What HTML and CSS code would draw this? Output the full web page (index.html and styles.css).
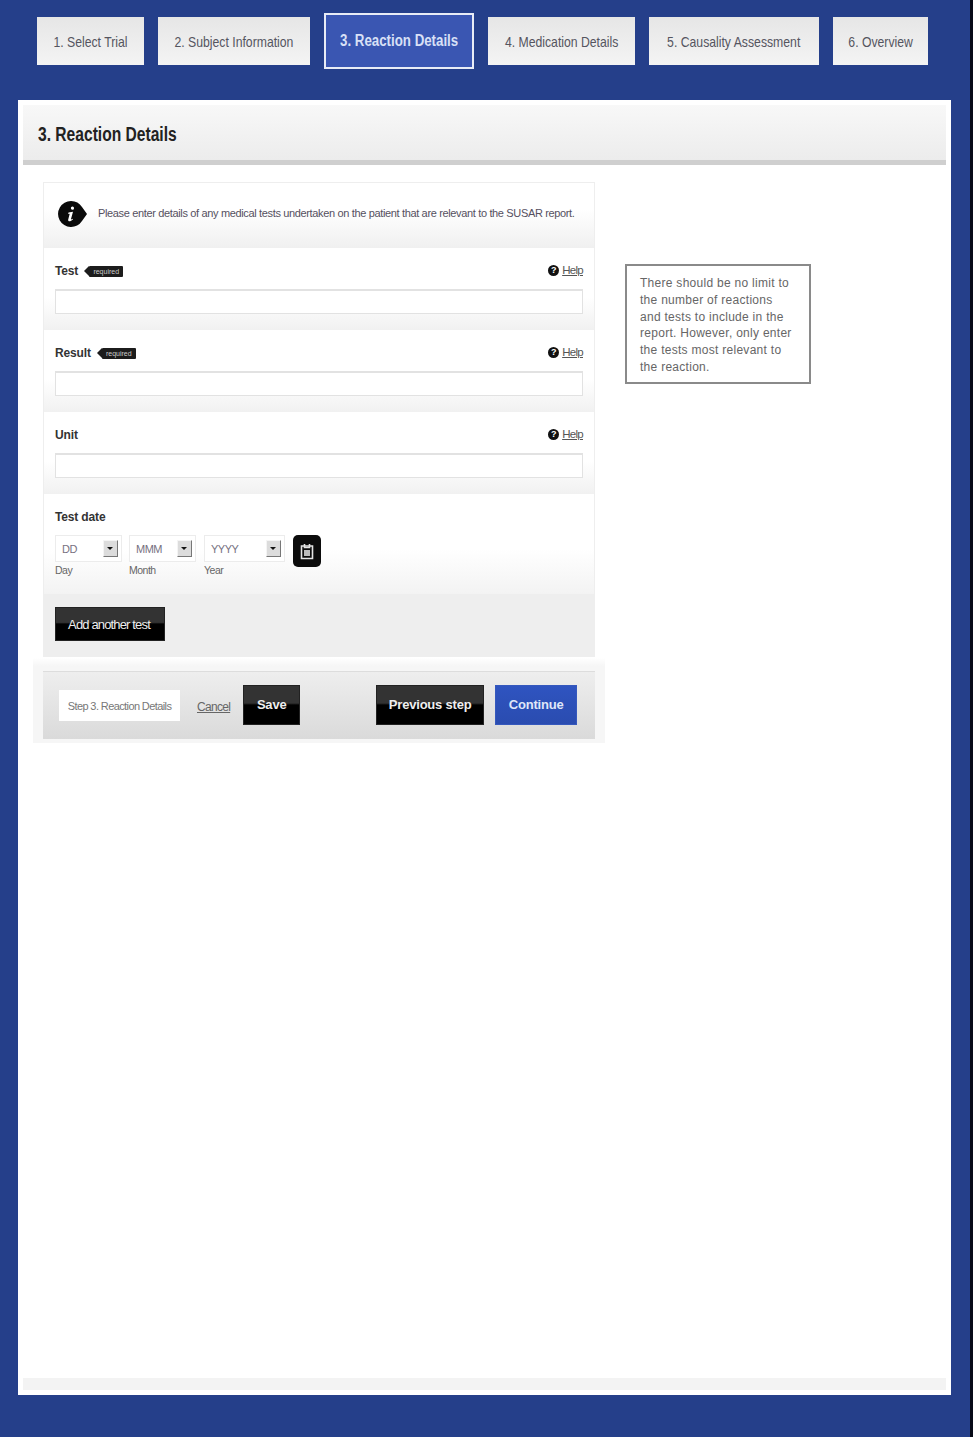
FILE: index.html
```html
<!DOCTYPE html>
<html lang="en">
<head>
    <meta charset="UTF-8">
    <meta name="viewport" content="width=device-width, initial-scale=1.0">
    <title>Reaction Details</title>
    <link rel="stylesheet" href="styles.css">
</head>
<body>
<nav class="steps">
    <a class="step"><span>1. Select Trial</span></a>
    <a class="step"><span>2. Subject Information</span></a>
    <a class="step active"><span>3. Reaction Details</span></a>
    <a class="step"><span>4. Medication Details</span></a>
    <a class="step"><span>5. Causality Assessment</span></a>
    <a class="step"><span>6. Overview</span></a>
</nav>

<main class="panel">
    <h1 class="panel-title"><span>3. Reaction Details</span></h1>
    <div class="panel-body">
        <div class="form-wrap">
            <form class="form-card">
                <div class="intro">
                    <svg class="info-icon" width="29" height="26" viewBox="0 0 29 26">
                        <path d="M13 0a13 13 0 0 1 11 6l5 7-5 7a13 13 0 1 1-11-20z" fill="#0a0a0a"/>
                        <path d="M14.5 5.500a1.600 1.600 0 1 1-.1 3.200a1.600 1.600 0 0 1 .1-3.200zM10.500 11.500l4.500-.8-2 7.300c-.1.600.3.700 1.700-.3l.3.500c-1.700 1.600-2.900 2.200-4 2-.8-.2-1-.8-.8-1.600l1.500-5.900-1.500.2z" fill="#fff"/>
                    </svg>
                    <p>Please enter details of any medical tests undertaken on the patient that are relevant to the SUSAR report.</p>
                </div>

                <div class="field">
                    <div class="field-head">
                        <label class="field-label">Test <span class="req">required</span></label>
                        <a class="help"><span class="help-dot">?</span><span class="help-link">Help</span></a>
                    </div>
                    <input type="text" class="text-input">
                </div>
                <div class="field">
                    <div class="field-head">
                        <label class="field-label">Result <span class="req">required</span></label>
                        <a class="help"><span class="help-dot">?</span><span class="help-link">Help</span></a>
                    </div>
                    <input type="text" class="text-input">
                </div>
                <div class="field">
                    <div class="field-head">
                        <label class="field-label">Unit</label>
                        <a class="help"><span class="help-dot">?</span><span class="help-link">Help</span></a>
                    </div>
                    <input type="text" class="text-input">
                </div>

                <div class="date-field">
                    <label class="field-label">Test date</label>
                    <div class="date-row">
                        <div class="date-part">
                            <div class="fake-select day"><span>DD</span><i class="arrow"></i></div>
                            <small>Day</small>
                        </div>
                        <div class="date-part">
                            <div class="fake-select month"><span>MMM</span><i class="arrow"></i></div>
                            <small>Month</small>
                        </div>
                        <div class="date-part year-part">
                            <div class="fake-select year"><span>YYYY</span><i class="arrow"></i></div>
                            <small>Year</small>
                        </div>
                        <button type="button" class="cal-btn">
                            <svg width="14" height="17" viewBox="0 0 14 17">
                                <path d="M1.500 3h11v12.500h-11z" fill="none" stroke="#e4e4e4" stroke-width="1.600"/>
                                <path d="M4.500 1v3.500h5V1" fill="none" stroke="#e4e4e4" stroke-width="1.600"/>
                                <path d="M4 7h6v6H4z" fill="#bbb"/>
                            </svg>
                        </button>
                    </div>
                </div>

                <div class="add-row">
                    <button type="button" class="btn-black add-btn">Add another test</button>
                </div>
            </form>

            <div class="actions">
                <span class="step-name">Step 3. Reaction Details</span>
                <a class="cancel">Cancel</a>
                <button type="button" class="btn-black action-btn save-btn">Save</button>
                <button type="button" class="btn-black action-btn prev-btn">Previous step</button>
                <button type="button" class="action-btn continue-btn">Continue</button>
            </div>
        </div>

        <aside class="note">There should be no limit to the number of reactions and tests to include in the report. However, only enter the tests most relevant to the reaction.</aside>
    </div>
    <div class="panel-foot"></div>
</main>
</body>
</html>
```

FILE: styles.css
```css
:root{
    --navy:#253f8a; --blue:#3a56b2; --line:#e2e2e2; --text:#3c3c44;
}
*{box-sizing:border-box;}
body{
    margin:0; height:1437px; overflow:hidden;
    background:var(--navy); color:var(--text);
    border-right:3px solid #070b18;
    font-family:"Liberation Sans", Arial, sans-serif;
    display:flex; flex-direction:column;
}
.steps{
    display:grid;
    grid-template-columns:107px 152px 150px 147px 170px 95px;
    column-gap:14px;
    height:48px; margin:17px 0 35px 37px;
}
.step{
    display:flex; align-items:center; justify-content:center;
    background:linear-gradient(#e6e6e6,#f4f4f4);
    color:#55555f; font-size:15px; white-space:nowrap;
}
/* the reference type is a narrow face, none is installed */
.step span{display:inline-block; transform:scaleX(.815);}
.step.active{
    margin:-4px 0;
    background:var(--blue); border:2px solid #e8ecf6;
    color:#d8e0f6; font-size:16px; font-weight:bold;
}
.step.active span{transform:scaleX(.83);}
.panel{
    width:933px; height:1295px; margin-left:18px;
    background:#fff; padding:5px 5px 0;
    display:flex; flex-direction:column;
}
.panel-title{
    margin:0; height:60px; padding:3px 0 0 15px;
    display:flex; align-items:center;
    background:linear-gradient(#f8f8f8,#ececec);
    border-bottom:5px solid #cfcfcf;
    color:#222; font-size:20px;
}
.panel-title span{display:inline-block; transform:scaleX(.78); transform-origin:left center; white-space:nowrap;}
.panel-body{flex:1; display:flex; align-items:flex-start; padding:17px 0 0 10px;}
.form-wrap{
    width:572px; padding:0 10px 4px;
    background:linear-gradient(#fff 476px,#f6f6f6 484px);
}
.form-card{border:1px solid #eee; border-width:1px 1px 0;}
.intro{
    height:65px; padding:0 0 4px 14px;
    display:flex; align-items:center; gap:11px;
    background:linear-gradient(#fff 40%,#f0f0f0);
}
.intro p{margin:0 0 2px; font-size:11px; letter-spacing:-.35px; color:#55505f; white-space:nowrap;}
.field{
    height:82px; padding:14px 11px 0;
    background:linear-gradient(#fff 60%,#f1f1f1);
}
.field-head{display:flex; justify-content:space-between; align-items:center; height:18px; margin-bottom:9px;}
.field-label{font-size:12px; font-weight:bold; color:#333; letter-spacing:-.15px;}
.req{
    display:inline-block; position:relative; margin-left:8px; padding:0 4px;
    background:#1c1c1c; color:#ccc; border-radius:1px;
    font-size:7px; line-height:11px; font-weight:normal; letter-spacing:0; vertical-align:1px;
}
.req::before{
    content:""; position:absolute; left:-5px; top:0;
    border:5.5px solid transparent; border-left-width:0; border-right-color:#1c1c1c;
}
.help{display:flex; align-items:center; gap:3px; margin-bottom:2px; font-size:11.5px; letter-spacing:-.7px; color:#555;}
.help-dot{
    width:11px; height:11px; border-radius:50%;
    background:#111; color:#fff; font-size:9px; font-weight:bold; line-height:11px; text-align:center; letter-spacing:0;
}
.help-link,.cancel{text-decoration:underline;}
.text-input{
    display:block; width:100%; height:25px;
    background:#fff; border:1px solid var(--line); border-top-width:2px;
}
.date-field{height:100px; padding:16px 11px 0; background:linear-gradient(#fff 55%,#f3f3f3);}
.date-field .field-label{display:block; line-height:15px;}
.date-row{display:flex; align-items:flex-start; gap:7px; margin-top:10px;}
.date-part{display:flex; flex-direction:column;}
.date-part small{margin-top:2px; font-size:10.5px; letter-spacing:-.5px; color:#666;}
.year-part{margin-left:1px;}
.fake-select{
    height:27px; padding:0 3px 0 6px;
    display:flex; align-items:center; justify-content:space-between;
    background:#fff; border:1px solid #ececec;
    font-size:11px; letter-spacing:-.5px; color:#77717f;
}
.day,.month{width:67px;}
.year{width:81px;}
.arrow{
    width:15px; height:17px; position:relative;
    background:#dcdcdc; border:1px solid; border-color:#f4f4f4 #777 #777 #f4f4f4;
}
.arrow::after{
    content:""; position:absolute; left:3px; top:6px;
    border:3.5px solid transparent; border-top-color:#111; border-bottom-width:0;
}
.cal-btn{
    width:28px; height:32px; padding:0; margin-left:1px;
    display:flex; align-items:center; justify-content:center;
    background:#0c0c0c; border:none; border-radius:5px;
}
.add-row{height:63px; padding:13px 11px 0; background:#eeeeee;}
.btn-black{
    background:linear-gradient(#333 45%,#000 50%);
    border:1px solid #222; color:#eee;
    font-family:inherit;
}
.add-btn{width:110px; height:34px; padding:0 2px 0 0; font-size:13px; letter-spacing:-.85px;}
.actions{
    height:68px; margin-top:14px; padding:13px 0 0 16px;
    display:flex; align-items:flex-start;
    background:linear-gradient(#eeeeee,#dadada);
    border-top:1px solid #ddd;
}
.step-name{
    width:121px; height:31px; margin-top:5px;
    display:flex; align-items:center; justify-content:center;
    background:#fff; color:#777;
    font-size:11px; letter-spacing:-.6px; white-space:nowrap;
}
.cancel{margin:15px 13px 0 17px; font-size:12px; letter-spacing:-.7px; color:#666;}
.action-btn{height:40px; padding:0 0 2px; font-family:inherit; font-size:13px; font-weight:bold; letter-spacing:-.2px;}
.save-btn{width:57px; margin-right:76px;}
.prev-btn{width:108px; margin-right:11px;}
.continue-btn{width:82px; background:linear-gradient(#2f54c0,#2a4cb0); border:1px solid #3558bd; color:#dfe6f8;}
.note{
    width:186px; height:120px; margin:82px 0 0 20px; padding:9px 14px 0 13px;
    background:#fff; border:2px solid #8a8a8a;
    color:#666; font-size:12px; line-height:16.8px; letter-spacing:.28px;
}
.panel-foot{height:12px; margin-bottom:5px; background:#f3f3f3;}
```
